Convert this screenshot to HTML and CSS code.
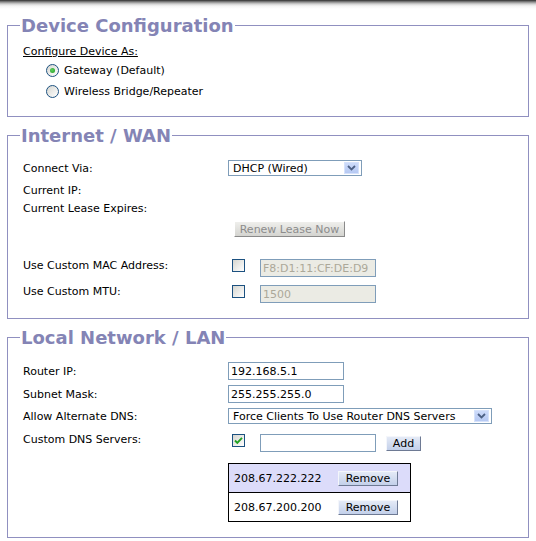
FILE: index.html
```html
<!DOCTYPE html>
<html lang="en">
<head>
    <meta charset="UTF-8">
    <meta name="viewport" content="width=device-width, initial-scale=1.0">
    <title>Network Settings</title>
    <link rel="stylesheet" href="styles.css">
</head>
<body>
    <div class="shade"></div>
    <div class="page">
        <!-- Device mode -->
        <fieldset class="group group-device">
            <legend>Device Configuration</legend>
            <div class="rows">
                <div class="caption">Configure Device As:</div>
                <div class="option first-option"><span class="radio on"><span class="dot"></span></span>Gateway (Default)</div>
                <div class="option"><span class="radio"></span>Wireless Bridge/Repeater</div>
            </div>
        </fieldset>

        <!-- WAN side -->
        <fieldset class="group">
            <legend>Internet / WAN</legend>
            <div class="rows">
                <div class="row row-connect">
                    <div class="label">Connect Via:</div>
                    <div class="select select-connect">
                        <span class="select-text">DHCP (Wired)</span>
                        <span class="select-arrow"><svg width="9" height="6" viewBox="0 0 9 6"><path d="M1 1 L4.5 4.5 L8 1" fill="none" stroke="#4d6185" stroke-width="1.8"/></svg></span>
                    </div>
                </div>
                <div class="row row-info first-info">
                    <div class="label">Current IP:</div>
                </div>
                <div class="row row-info">
                    <div class="label">Current Lease Expires:</div>
                </div>
                <div class="row row-renew">
                    <div class="label"></div>
                    <button class="btn btn-off btn-renew" disabled>Renew Lease Now</button>
                </div>
                <div class="row row-top row-mac">
                    <div class="label">Use Custom MAC Address:</div>
                    <span class="check"></span>
                    <input type="text" class="text" value="F8:D1:11:CF:DE:D9" disabled>
                </div>
                <div class="row row-top row-mtu">
                    <div class="label">Use Custom MTU:</div>
                    <span class="check"></span>
                    <input type="text" class="text" value="1500" disabled>
                </div>
            </div>
        </fieldset>

        <!-- LAN side -->
        <fieldset class="group">
            <legend>Local Network / LAN</legend>
            <div class="rows">
                <div class="row row-router">
                    <div class="label">Router IP:</div>
                    <input type="text" class="text" value="192.168.5.1">
                </div>
                <div class="row row-subnet">
                    <div class="label">Subnet Mask:</div>
                    <input type="text" class="text" value="255.255.255.0">
                </div>
                <div class="row row-dns-mode">
                    <div class="label">Allow Alternate DNS:</div>
                    <div class="select select-dns">
                        <span class="select-text">Force Clients To Use Router DNS Servers</span>
                        <span class="select-arrow"><svg width="9" height="6" viewBox="0 0 9 6"><path d="M1 1 L4.5 4.5 L8 1" fill="none" stroke="#4d6185" stroke-width="1.8"/></svg></span>
                    </div>
                </div>
                <div class="row row-top row-dns">
                    <div class="label label-dns">Custom DNS Servers:</div>
                    <span class="check"><svg width="11" height="11" viewBox="0 0 11 11"><path d="M2 5.5 L4.3 7.8 L9 2.8" fill="none" stroke="#21a121" stroke-width="1.9"/></svg></span>
                    <input type="text" class="text" value="">
                    <button class="btn btn-add">Add</button>
                </div>
                <div class="servers">
                    <div class="server selected">
                        <span class="server-ip">208.67.222.222</span>
                        <button class="btn btn-remove">Remove</button>
                    </div>
                    <div class="server">
                        <span class="server-ip">208.67.200.200</span>
                        <button class="btn btn-remove">Remove</button>
                    </div>
                </div>
            </div>
        </fieldset>
    </div>
</body>
</html>
```

FILE: styles.css
```css
body {
    margin: 0;
    font-family: "DejaVu Sans", Verdana, sans-serif;
    font-size: 11px;
    color: #000;
    background: #fff;
}

.shade {
    height: 9px;
    background: linear-gradient(#2e2e2e, #8a8a8a 2px, #d2d2d2 4px, #f4f4f4 6px, #fff 9px);
}

.page {
    padding: 6px 7px 0;
}

.group {
    margin: 0 0 8px;
    border: 1px solid #9090c0;
    padding: 0 12px 15px;
    min-inline-size: 0;
}

.group-device {
    padding-bottom: 14px;
}

.group legend {
    padding: 0 1px;
    font-size: 18px;
    font-weight: bold;
    line-height: 21px;
    color: #8484b5;
}

.rows {
    padding-left: 3px;
}

/* Device configuration */
.caption {
    margin-top: 9px;
    line-height: 13px;
    text-decoration: underline;
}

.option {
    display: flex;
    align-items: center;
    height: 21px;
    margin-left: 23px;
    gap: 5px;
}

.first-option {
    margin-top: 2px;
}

.radio {
    box-sizing: border-box;
    width: 13px;
    height: 13px;
    border: 1px solid #1c5180;
    border-radius: 50%;
    background: linear-gradient(135deg, #d6d6d0, #fff);
    display: flex;
    align-items: center;
    justify-content: center;
}

.radio .dot {
    width: 5px;
    height: 5px;
    border-radius: 50%;
    background: radial-gradient(circle at 40% 40%, #5ed05e, #1f9a1f);
}

/* Form rows */
.row {
    display: flex;
    align-items: center;
}

.row-top {
    align-items: flex-start;
}

.label {
    width: 205px;
    flex: none;
    line-height: 13px;
}

.row-connect {
    margin-top: 13px;
    height: 18px;
}

.row-info {
    height: 18px;
}

.first-info {
    margin-top: 4px;
}

.row-renew {
    margin-top: 4px;
}

.row-mac {
    margin-top: 22px;
}

.row-mtu {
    margin-top: 8px;
}

.row-router {
    margin-top: 14px;
}

.row-subnet {
    margin-top: 5px;
}

.row-dns-mode {
    margin-top: 5px;
}

.row-dns {
    margin-top: 10px;
}

.label-dns {
    margin-top: -1px;
}

/* Controls */
.select {
    box-sizing: border-box;
    height: 16px;
    border: 1px solid #7f9db9;
    background: #fff;
    display: flex;
    align-items: center;
    padding-left: 4px;
}

.select-connect {
    width: 134px;
}

.select-dns {
    width: 264px;
}

.select-text {
    flex: 1;
    white-space: nowrap;
}

.select-arrow {
    box-sizing: border-box;
    width: 15px;
    height: 12px;
    margin-right: 2px;
    border: 1px solid #d6e2fb;
    background: linear-gradient(#cddbfa, #b6c9f3);
    display: flex;
    align-items: center;
    justify-content: center;
}

.text {
    box-sizing: border-box;
    width: 116px;
    height: 18px;
    margin: 0;
    border: 1px solid #7f9db9;
    padding: 0 2px;
    font-family: inherit;
    font-size: 11px;
    color: #000;
    background: #fff;
}

.text:disabled {
    background: #ebebe4;
    color: #aca899;
}

.check {
    box-sizing: border-box;
    width: 13px;
    height: 13px;
    margin: 0 15px 0 4px;
    border: 1px solid #1c5180;
    background: linear-gradient(135deg, #d6d6d0, #fff);
    display: flex;
    align-items: center;
    justify-content: center;
}

.btn {
    box-sizing: border-box;
    height: 15px;
    padding: 0;
    border: 1px solid;
    border-color: #f4f6fb #6e7a94 #6e7a94 #f4f6fb;
    background: linear-gradient(#e4eaf6, #c3d0ea);
    font-family: inherit;
    font-size: 11px;
    color: #000;
    line-height: 13px;
}

.btn-off {
    border-color: #fff #8a8a8a #8a8a8a #fff;
    background: linear-gradient(#efefec, #d4d4d0);
    color: #8c8c8c;
}

.btn-renew {
    width: 111px;
    height: 16px;
    margin-left: 6px;
}

.btn-add {
    width: 35px;
    margin: 2px 0 0 10px;
}

.btn-remove {
    width: 60px;
}

/* DNS server list */
.servers {
    width: 181px;
    margin-top: 11px;
    margin-left: 205px;
    border: 1px solid #000;
}

.server {
    display: flex;
    align-items: center;
    height: 28px;
    padding-left: 5px;
}

.server + .server {
    border-top: 1px solid #000;
}

.server.selected {
    background: #dcdcfa;
}

.server-ip {
    width: 104px;
}
```
